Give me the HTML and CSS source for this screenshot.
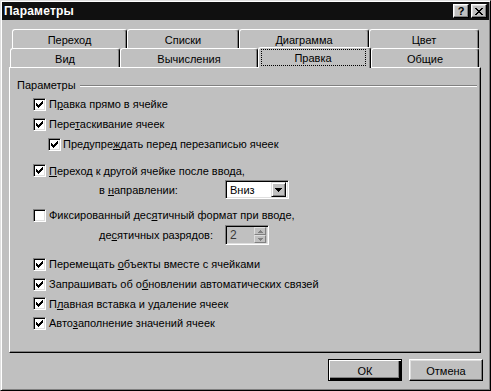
FILE: index.html
```html
<!DOCTYPE html>
<html lang="ru">
<head>
<meta charset="utf-8">
<title>Параметры</title>
<link rel="stylesheet" href="styles.css">
</head>
<body>
<div class="window">
  <div class="titlebar">
    <span class="title">Параметры</span>
    <div class="tbtns">
      <span class="tbtn help">?</span>
      <span class="tbtn close"><svg width="8" height="7" viewBox="0 0 8 7" shape-rendering="crispEdges"><path d="M0 0h2v1h-2zM6 0h2v1h-2zM1 1h2v1h-2zM5 1h2v1h-2zM2 2h4v1h-4zM3 3h2v1h-2zM2 4h4v1h-4zM1 5h2v1h-2zM5 5h2v1h-2zM0 6h2v1h-2zM6 6h2v1h-2z" fill="#000"/></svg></span>
    </div>
  </div>

  <div class="tabs">
    <div class="tabrow row1">
      <div class="tab w115">Переход</div>
      <div class="tab w112">Списки</div>
      <div class="tab w130">Диаграмма</div>
      <div class="tab w110">Цвет</div>
    </div>
    <div class="tabrow row2">
      <div class="tab w110">Вид</div>
      <div class="tab w138">Вычисления</div>
      <div class="tab w113 active"><span class="focus">Правка</span></div>
      <div class="tab w108">Общие</div>
    </div>
  </div>

  <div class="panel">
    <div class="group-head"><span>Параметры</span><span class="line"></span></div>

    <div class="row r1"><span class="cb checked"></span><span>П<u>р</u>авка прямо в ячейке</span></div>
    <div class="row"><span class="cb checked"></span><span>Пере<u>т</u>аскивание ячеек</span></div>
    <div class="row indent"><span class="cb checked"></span><span>Предупре<u>ж</u>дать перед перезаписью ячеек</span></div>

    <div class="row r4"><span class="cb checked"></span><span><u>П</u>ереход к другой ячейке после ввода,</span></div>
    <div class="sub sub1">
      <span class="sublabel">в <u>н</u>аправлении:</span>
      <div class="combo">
        <span class="combo-text">Вниз</span>
        <span class="combo-btn"><svg width="7" height="4" viewBox="0 0 7 4" shape-rendering="crispEdges"><path d="M0 0h7v1h-7zM1 1h5v1h-5zM2 2h3v1h-3zM3 3h1v1h-1z" fill="#000"/></svg></span>
      </div>
    </div>

    <div class="row r5"><span class="cb"></span><span>Фиксированный дес<u>я</u>тичный формат при вводе,</span></div>
    <div class="sub sub2">
      <span class="sublabel">де<u>с</u>ятичных разрядов:</span>
      <div class="spin">
        <span class="spin-text">2</span>
        <span class="spin-btns">
          <span class="sbtn"><svg width="5" height="3" viewBox="0 0 5 3" shape-rendering="crispEdges"><path d="M2 0h1v1h-1zM1 1h3v1h-3zM0 2h5v1h-5z" fill="#808080"/></svg></span>
          <span class="sbtn"><svg width="5" height="3" viewBox="0 0 5 3" shape-rendering="crispEdges"><path d="M0 0h5v1h-5zM1 1h3v1h-3zM2 2h1v1h-1z" fill="#808080"/></svg></span>
        </span>
      </div>
    </div>

    <div class="row r6"><span class="cb checked"></span><span>Перемещать <u>о</u>бъекты вместе с ячейками</span></div>
    <div class="row"><span class="cb checked"></span><span>Запрашивать об о<u>б</u>новлении автоматических связей</span></div>
    <div class="row h19"><span class="cb checked"></span><span>П<u>л</u>авная вставка и удаление ячеек</span></div>
    <div class="row"><span class="cb checked"></span><span>Авто<u>з</u>аполнение значений ячеек</span></div>
  </div>

  <div class="buttons">
    <div class="btn default"><span class="btn-in">ОК</span></div>
    <div class="btn"><span class="btn-in">Отмена</span></div>
  </div>
</div>
</body>
</html>
```

FILE: styles.css
```css
* { box-sizing: border-box; }
html, body { margin: 0; padding: 0; background: #c0c0c0; }
body {
  font-family: "Liberation Sans", Arial, sans-serif;
  font-size: 11px;
  color: #000;
}
u { text-decoration: underline; text-underline-offset: 1px; }

.window {
  width: 491px;
  height: 391px;
  background: #c0c0c0;
  border: 1px solid;
  border-color: #dfdfdf #000 #000 #dfdfdf;
  box-shadow: inset 1px 1px #fff, inset -1px -1px #808080;
  padding: 1px;
  display: flex;
  flex-direction: column;
}

/* title bar */
.titlebar {
  height: 18px;
  background: #101010;
  color: #fff;
  display: flex;
  align-items: center;
  justify-content: space-between;
  padding: 0 2px 0 2px;
}
.title { font-weight: bold; font-size: 12px; letter-spacing: 0.2px; }
.tbtns { display: flex; gap: 2px; }
.tbtn {
  width: 16px;
  height: 14px;
  background: #c0c0c0;
  border: 1px solid;
  border-color: #fff #000 #000 #fff;
  box-shadow: inset -1px -1px #808080, inset 1px 1px #dfdfdf;
  display: flex;
  align-items: center;
  justify-content: center;
  color: #000;
  font-weight: bold;
  font-size: 11px;
  line-height: 1;
}

/* tabs */
.tabs { margin-top: 9px; display: flex; flex-direction: column; }
.tabrow { display: flex; height: 19px; }
.row1 { margin-left: 10px; }
.row2 { margin-left: 8px; }
.tab {
  height: 19px;
  display: flex;
  align-items: center;
  justify-content: center;
  padding-top: 2px;
  background: #c0c0c0;
  border-top: 1px solid #fff;
  border-left: 1px solid #fff;
  border-right: 1px solid #000;
  box-shadow: inset -1px 0 #808080;
  border-radius: 3px 3px 0 0;
}
.w108 { width: 108px; }
.w110 { width: 110px; }
.w112 { width: 112px; }
.w113 { width: 113px; }
.w115 { width: 115px; }
.w130 { width: 130px; }
.w138 { width: 138px; }
.tab.active {
  height: 21px;
  margin-top: -1px;
  position: relative;
  z-index: 1;
  padding-top: 1px;
  align-items: flex-start;
}
.focus {
  margin-top: 0;
  width: 105px;
  height: 17px;
  margin-right: 3px;
  border: 1px dotted #000;
  display: flex;
  align-items: center;
  justify-content: center;
  padding-top: 1px;
}

/* panel */
.panel {
  margin-left: 7px;
  width: 472px;
  height: 286px;
  border: 1px solid;
  border-color: #fff #000 #000 #fff;
  box-shadow: inset -1px -1px #808080;
  padding: 10px 2px 0 7px;
  display: flex;
  flex-direction: column;
}
.group-head { display: flex; align-items: center; height: 14px; }
.group-head .line {
  flex: 1;
  height: 2px;
  border-top: 1px solid #808080;
  border-bottom: 1px solid #fff;
  margin: 1px 1px 0 4px;
}

.row { display: flex; align-items: center; height: 20px; padding-left: 16px; white-space: nowrap; }
.row.h19 { height: 19px; }
.row.indent { padding-left: 31px; }
.r1 { margin-top: 2px; }
.r4 { margin-top: 7px; height: 19px; }
.r5 { margin-top: 6px; }
.r6 { margin-top: 9px; }

.cb {
  width: 13px;
  height: 13px;
  flex: none;
  margin-right: 3px;
  background: #fff;
  border: 1px solid;
  border-color: #808080 #fff #fff #808080;
  box-shadow: inset 1px 1px #000, inset -1px -1px #dfdfdf;
}
.cb.checked {
  background: #fff url("data:image/svg+xml;utf8,<svg xmlns='http://www.w3.org/2000/svg' width='11' height='11' viewBox='0 0 11 11' shape-rendering='crispEdges'><path d='M8 2h1v1h-1zM7 3h2v1h-2zM2 4h1v1h-1zM6 4h3v1h-3zM2 5h2v1h-2zM5 5h3v1h-3zM2 6h5v1h-5zM3 7h3v1h-3zM4 8h1v1h-1z' fill='black'/></svg>") no-repeat 0 0;
}
.indent .cb { margin-right: 2px; }

.sub { display: flex; align-items: center; padding-left: 82px; }
.sub1 { height: 19px; }
.sub2 { height: 20px; }
.sublabel { width: 126px; flex: none; white-space: nowrap; }

.combo {
  width: 64px;
  height: 19px;
  background: #fff;
  border: 1px solid;
  border-color: #808080 #fff #fff #808080;
  box-shadow: inset 1px 1px #000, inset -1px -1px #dfdfdf;
  display: flex;
  align-items: center;
  justify-content: space-between;
  padding: 2px;
}
.combo-text { padding-left: 2px; }
.combo-btn {
  width: 15px;
  height: 15px;
  background: #c0c0c0;
  border: 1px solid;
  border-color: #dfdfdf #000 #000 #dfdfdf;
  box-shadow: inset 1px 1px #fff, inset -1px -1px #808080;
  display: flex;
  align-items: center;
  justify-content: center;
}

.spin {
  width: 44px;
  height: 20px;
  background: #c0c0c0;
  border: 1px solid;
  border-color: #808080 #fff #fff #808080;
  box-shadow: inset 1px 1px #000, inset -1px -1px #dfdfdf;
  display: flex;
  align-items: center;
  justify-content: space-between;
  padding: 2px;
}
.spin-text { padding-left: 2px; color: #3a3a3a; font-size: 12px; }
.spin-btns { display: flex; flex-direction: column; width: 12px; height: 16px; }
.sbtn {
  flex: 1;
  background: #c0c0c0;
  border: 1px solid;
  border-color: #dfdfdf #808080 #808080 #dfdfdf;
  display: flex;
  align-items: center;
  justify-content: center;
}

/* bottom buttons */
.buttons {
  margin-top: 6px;
  display: flex;
  justify-content: flex-end;
  gap: 7px;
  padding-right: 6px;
}
.btn {
  width: 74px;
  height: 22px;
  background: #c0c0c0;
  border: 1px solid;
  border-color: #fff #000 #000 #fff;
  box-shadow: inset -1px -1px #808080, inset 1px 1px #dfdfdf;
  display: flex;
  align-items: center;
  justify-content: center;
}
.btn.default {
  border: 1px solid #000;
  box-shadow: inset 1px 1px #fff, inset -2px -2px #000, inset -3px -3px #808080;
}
.btn-in { padding-top: 1px; }
```
